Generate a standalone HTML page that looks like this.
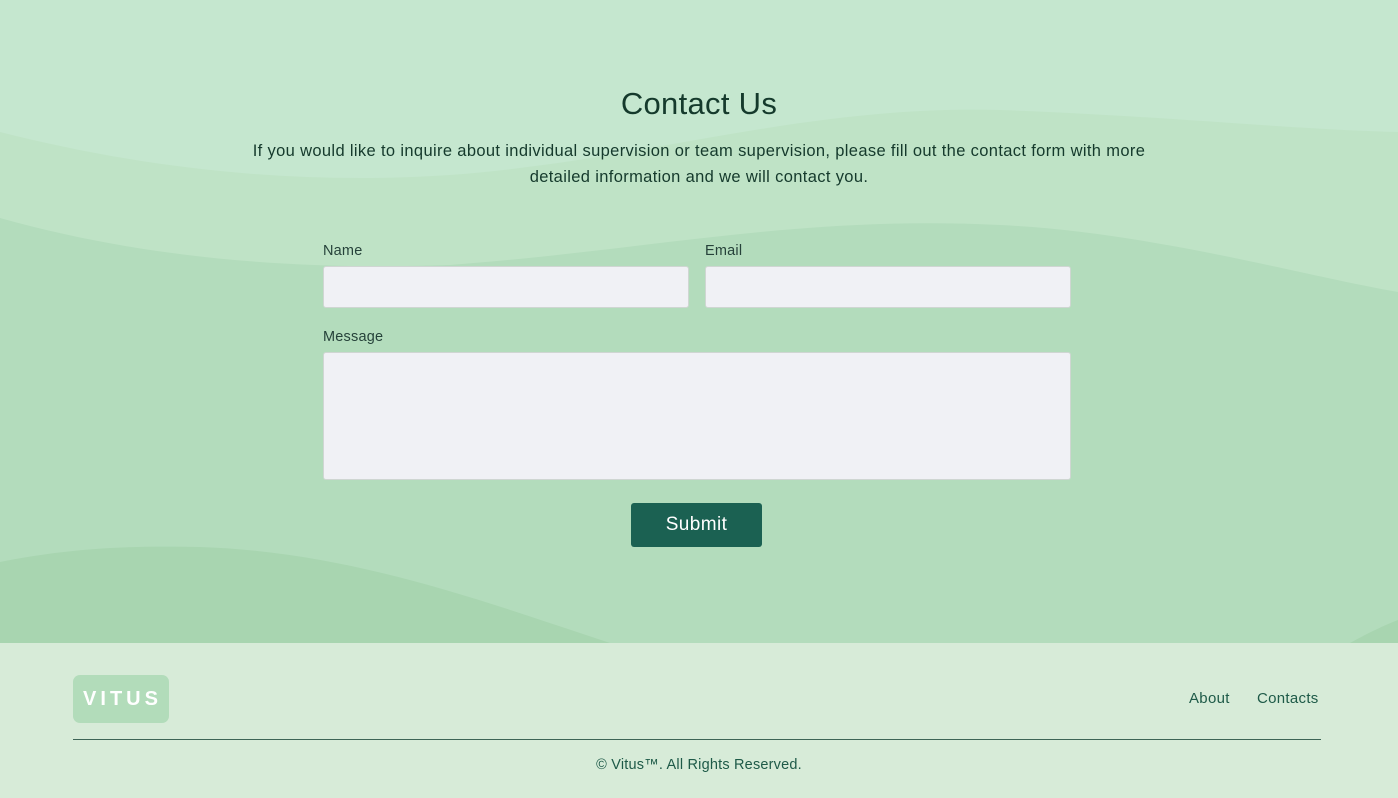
<!DOCTYPE html>
<html><head><style>
*{box-sizing:border-box;margin:0;padding:0}
body{width:1398px;height:798px;overflow:hidden;font-family:"Liberation Sans",sans-serif;background:#d7ebd8;position:relative}
.hero{position:absolute;left:0;top:0;width:1398px;height:643px;background:#c5e7cf;overflow:hidden}
svg.bg{position:absolute;left:0;top:0}
h1{position:absolute;top:86px;width:100%;text-align:center;font-weight:normal;font-size:31px;color:#153a2c;letter-spacing:0.3px}
.sub{position:absolute;top:138px;left:224px;width:950px;text-align:center;font-size:16.5px;line-height:26px;color:#153a2c;letter-spacing:0.35px}
label{position:absolute;font-size:14.5px;color:#26423a;letter-spacing:0.2px}
.in{position:absolute;background:#f0f1f5;border:1px solid #cfd6d2;border-radius:3px}
.btn{position:absolute;left:631px;top:503px;width:131px;height:44px;background:#1b6152;color:#fff;border-radius:3px;font-size:19px;text-align:center;line-height:44px;letter-spacing:0.4px}
.logo{position:absolute;left:73px;top:675px;width:96px;height:48px;background:#b2dcba;border-radius:7px;color:#fff;font-weight:bold;font-size:20px;letter-spacing:4px;line-height:48px;text-align:center;padding-left:3px}
.nav{position:absolute;top:690px;font-size:15px;color:#1e5a48;letter-spacing:0.3px}
hr{position:absolute;left:73px;top:739px;width:1248px;border:0;border-top:1px solid #3d6456}
.copy{position:absolute;top:757px;width:100%;text-align:center;font-size:14.5px;color:#1e5a48;letter-spacing:0.2px}
</style></head><body>
<div class="hero">
<svg class="bg" width="1398" height="643">
<path d="M0 132 C150 170 300 185 450 175 C650 160 800 105 1000 110 C1150 115 1300 130 1398 132 L1398 643 L0 643Z" fill="#bfe3c6"/>
<path d="M0 218 C150 260 300 270 450 265 C650 250 800 215 1000 225 C1150 232 1300 275 1398 292 L1398 643 L0 643Z" fill="#b3dcbc"/>
<path d="M0 562 C60 550 120 545 200 547 C350 552 480 600 610 643 L0 643Z" fill="#a8d5b0"/>
<path d="M1350 643 C1370 632 1385 625 1398 620 L1398 643Z" fill="#a8d5b0"/>
</svg>
<h1>Contact Us</h1>
<div class="sub">If you would like to inquire about individual supervision or team supervision, please fill out the contact form with more detailed information and we will contact you.</div>
<label style="left:323px;top:243px">Name</label>
<label style="left:705px;top:243px">Email</label>
<div class="in" style="left:323px;top:266px;width:366px;height:42px"></div>
<div class="in" style="left:705px;top:266px;width:366px;height:42px"></div>
<label style="left:323px;top:329px">Message</label>
<div class="in" style="left:323px;top:352px;width:748px;height:128px"></div>
<div class="btn">Submit</div>
</div>
<div class="logo">VITUS</div>
<div class="nav" style="left:1189px">About</div>
<div class="nav" style="left:1257px">Contacts</div>
<hr>
<div class="copy">© Vitus™. All Rights Reserved.</div>
</body></html>
